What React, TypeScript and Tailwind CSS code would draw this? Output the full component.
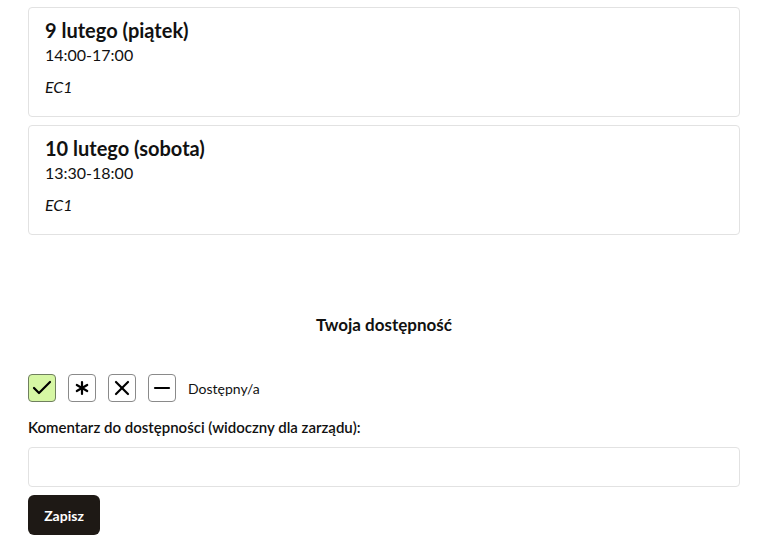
import { Check, Asterisk, X, Minus } from 'lucide-react';

const days = [
  { title: '9 lutego (piątek)', time: '14:00-17:00', place: 'EC1' },
  { title: '10 lutego (sobota)', time: '13:30-18:00', place: 'EC1' },
];

const options = [
  { icon: Check, active: true },
  { icon: Asterisk, active: false },
  { icon: X, active: false },
  { icon: Minus, active: false },
];

export default function App() {
  return (
    <div
      className="min-h-[548px] bg-white text-[#111] px-[28px] pt-[7px]"
      style={{ fontFamily: 'Lato, "Noto Sans", sans-serif' }}
    >
      <div className="flex flex-col gap-2">
        {days.map((d) => (
          <div
            key={d.title}
            className="h-[110px] rounded border border-[#e2e2e2] px-4 pt-[8px]"
          >
            <div className="text-[20px] font-bold leading-[28px]">{d.title}</div>
            <div className="text-[16px] leading-[22px]">{d.time}</div>
            <div className="mt-[10px] text-[16px] italic leading-[22px]">{d.place}</div>
          </div>
        ))}
      </div>

      <div className="mt-[79px] text-center text-[17px] font-bold leading-[22px]">
        Twoja dostępność
      </div>

      <div className="mt-[38px] flex items-center gap-3">
        {options.map((o, i) => {
          const Icon = o.icon;
          return (
            <button
              key={i}
              className={
                o.active
                  ? 'flex h-[28px] w-[28px] items-center justify-center rounded border border-[#6f7f5e] bg-[#d6f7a4]'
                  : 'flex h-[28px] w-[28px] items-center justify-center rounded border border-[#8a8a8a] bg-white'
              }
            >
              <Icon className="h-[24px] w-[24px] text-black" strokeWidth={2.2} />
            </button>
          );
        })}
        <span className="text-[14px]">Dostępny/a</span>
      </div>

      <div className="mt-[15px] text-[15px] font-semibold leading-[20px]">
        Komentarz do dostępności (widoczny dla zarządu):
      </div>
      <input
        className="mt-[10px] block h-[40px] w-full rounded border border-[#e2e2e2] px-3 outline-none"
        type="text"
      />
      <button className="mt-2 h-[40px] w-[72px] rounded-md bg-[#1e1915] text-[14px] font-bold text-white">
        Zapisz
      </button>
    </div>
  );
}
